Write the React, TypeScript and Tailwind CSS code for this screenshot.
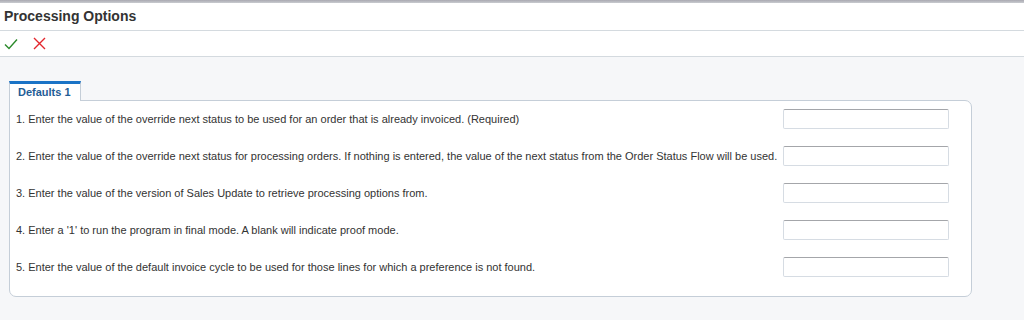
import React from 'react';

const options = [
  '1. Enter the value of the override next status to be used for an order that is already invoiced. (Required)',
  '2. Enter the value of the override next status for processing orders. If nothing is entered, the value of the next status from the Order Status Flow will be used.',
  '3. Enter the value of the version of Sales Update to retrieve processing options from.',
  "4. Enter a '1' to run the program in final mode. A blank will indicate proof mode.",
  '5. Enter the value of the default invoice cycle to be used for those lines for which a preference is not found.',
];

export default function App() {
  return (
    <div className="h-[320px] w-[1024px] overflow-hidden bg-[#f6f7f9] font-['Liberation_Sans',Arial,sans-serif] text-[#333]">
      <div className="h-[3px] bg-gradient-to-b from-[#a9a9b1] to-[#c9cbd0]" />
      <div className="flex h-[28px] items-center border-b border-[#d4dadf] bg-white pl-[4px]">
        <h1 className="text-[14px] font-bold text-[#333]">Processing Options</h1>
      </div>
      <div className="flex h-[26px] items-center gap-[15px] border-b border-[#d4dadf] bg-white pl-[4px]">
        <CheckIcon />
        <CrossIcon />
      </div>
      <div className="pl-[9px] pt-[24px]">
        <Tab label="Defaults 1" />
        <div className="-mt-px w-[963px] rounded-b-[7px] rounded-tr-[7px] border border-[#c5ced8] bg-white pb-[10px]">
          {options.map((text) => (
            <OptionRow key={text} text={text} />
          ))}
        </div>
      </div>
    </div>
  );
}

function Tab({ label }: { label: string }) {
  return (
    <div className="relative z-10 flex h-[20px] w-[72px] items-center border-x border-t-[3px] border-[#c5ced8] border-t-[#1a73c6] bg-white pl-[8px]">
      <span className="text-[11px] font-bold text-[#1f5d96]">{label}</span>
    </div>
  );
}

function OptionRow({ text }: { text: string }) {
  return (
    <div className="flex h-[37px] items-center pb-[2px] pl-[6px] pr-[22px]">
      <p className="flex-1 text-[11px] leading-[14px] text-[#333]">{text}</p>
      <input
        type="text"
        className="h-[20px] w-[166px] rounded-[2px] border border-[#d6dce3] border-t-[#a4a6aa] bg-white outline-none"
      />
    </div>
  );
}

function CheckIcon() {
  return (
    <svg width="14" height="12" viewBox="0 0 14 12" fill="none">
      <path d="M1 6.5 L5 10.5 L13 1.5" stroke="#2b8a2b" strokeWidth="1.4" />
    </svg>
  );
}

function CrossIcon() {
  return (
    <svg width="13" height="13" viewBox="0 0 13 13" fill="none">
      <path d="M1 1 L12 12 M12 1 L1 12" stroke="#e3262d" strokeWidth="1.4" />
    </svg>
  );
}
